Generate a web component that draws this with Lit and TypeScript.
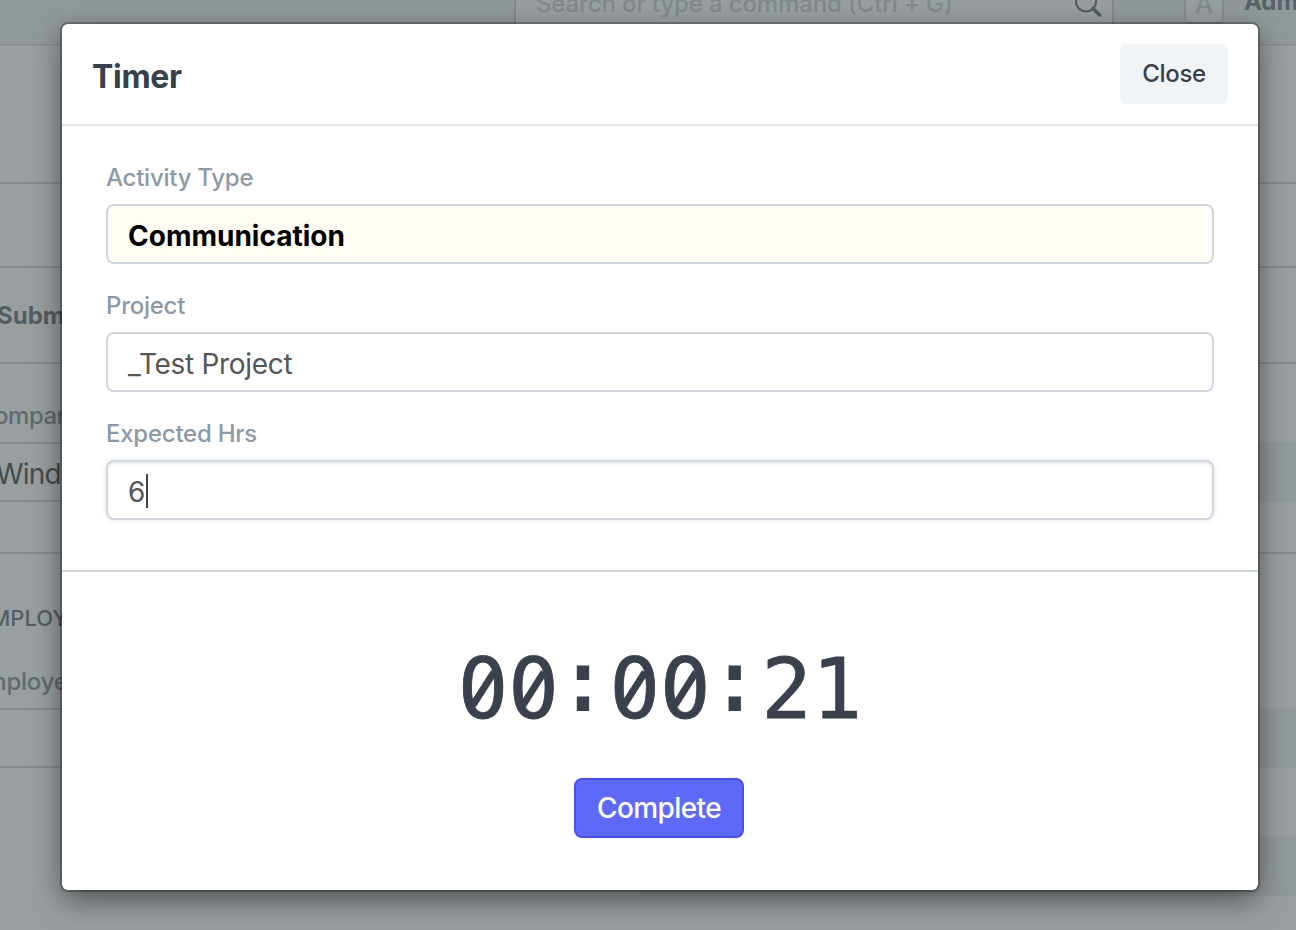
import { LitElement, html, css } from "lit";
import { customElement } from "lit/decorators.js";

@customElement("desk-page")
class DeskPage extends LitElement {
  static styles = css`
    :host { display: block; height: 930px; overflow: hidden; background: #999fa1; color: #535d63; }
    .nav { box-sizing: border-box; height: 46px; display: flex; align-items: flex-start; background: #92999b; border-bottom: 2px solid #8b9193; padding-left: 514px; overflow: hidden; }
    .search { box-sizing: border-box; flex: none; width: 600px; height: 34px; display: flex; justify-content: space-between; border: solid #83898c; border-width: 0 2px; background: #999fa1; padding: 0 9px 0 20px; color: #82898d; font-size: 24px; }
    .hint { line-height: 30px; margin-top: -11px; letter-spacing: -0.13px; white-space: pre; font-weight: 450; }
    .glass { width: 30px; height: 30px; margin-top: -11px; flex: none; }
    .avatar { box-sizing: border-box; flex: none; width: 40px; height: 38px; margin: -14px 0 0 70px; border: 2px solid #858c8f; border-radius: 6px; text-align: center; font-size: 26px; line-height: 31px; color: #838a8d; background: #999fa1; font-weight: 450; }
    .user { flex: none; margin: -13px 0 0 20px; font-size: 24px; line-height: 30px; font-weight: 700; white-space: nowrap; color: #586268; }
    .row { box-sizing: border-box; border-bottom: 2px solid #858b8f; white-space: nowrap; }
    .head { height: 138px; }
    .bar { height: 84px; }
    .state { height: 96px; font-size: 24px; font-weight: 700; line-height: 96px; }
    .state span { margin-left: -3px; }
    .section { height: 190px; }
    .last { border-bottom: 0; height: 376px; }
    .cols { display: grid; grid-template-columns: 640px 1fr; }
    .label { display: block; font-size: 24px; color: #606b70; font-weight: 450; }
    .company { height: 78px; line-height: 104px; margin-left: -23px; letter-spacing: -0.5px; }
    .box { box-sizing: border-box; height: 60px; border: solid #858b8f; border-width: 2px 0; font-size: 28px; line-height: 61px; color: #454c50; }
    .box span { margin-left: -4px; letter-spacing: -0.8px; }
    .band { height: 60px; background: #92999b; margin-top: 78px; }
    .heading { display: block; height: 62px; padding-top: 48px; box-sizing: border-box; line-height: 32px; margin-left: -23px; font-size: 22px; font-weight: 450; }
    .employee { height: 92px; line-height: 132px; margin-left: -29px; letter-spacing: -0.2px; }
    .first { margin-top: 154px; }
    .second { margin-top: 68px; }
  `;
  render() {
    return html`
      <div class="nav">
        <div class="search"><span class="hint">Search or type a command (Ctrl + G)</span>
          <svg class="glass" viewBox="0 0 30 30" fill="none" stroke="#535c60"><circle cx="13" cy="12.5" r="10" stroke-width="2"/><path d="m20 19.5 6.5 6.5" stroke-width="3.4" stroke-linecap="round"/></svg>
        </div>
        <div class="avatar">A</div><div class="user">Administrator</div>
      </div>
      <div class="row head"></div>
      <div class="row bar"></div>
      <div class="row state"><span>Submit</span></div>
      <div class="row section cols">
        <div><span class="label company">Company</span><div class="box"><span>Wind</span></div></div>
        <div><div class="band"></div></div>
      </div>
      <div class="row last cols">
        <div><span class="heading">EMPLOYEE</span><span class="label employee">Employee</span><div class="box"></div></div>
        <div><div class="band first"></div><div class="band second"></div></div>
      </div>`;
  }
}

@customElement("timer-dialog")
class TimerDialog extends LitElement {
  static styles = css`
    :host { display: flex; flex-direction: column; background: #fff; border-radius: 6px; box-shadow: 0 0 0 2px rgba(0,0,0,.25), 0 10px 30px rgba(0,0,0,.5); color: #36414c; }
    .header { box-sizing: border-box; height: 102px; display: flex; justify-content: space-between; align-items: flex-start; border-bottom: 2px solid #e3e5e7; padding: 20px 30px 0 30px; }
    .title { font-size: 32px; line-height: 40px; margin-top: 13px; font-weight: 700; letter-spacing: -0.3px; }
    .close { width: 108px; height: 60px; border-radius: 6px; background: #f0f4f7; text-align: center; font-size: 24px; line-height: 59px; font-weight: 450; letter-spacing: -0.3px; }
    .form { box-sizing: border-box; height: 446px; padding: 36px 44px 0; border-bottom: 2px solid #d1d8dd; }
    .field { height: 128px; }
    .label { display: block; height: 42px; line-height: 32px; font-size: 24px; color: #8d99a6; font-weight: 450; letter-spacing: -0.25px; }
    .input { box-sizing: border-box; height: 60px; display: flex; align-items: center; border: 2px solid #d1d5dd; border-radius: 8px; padding: 3px 20px 0; font-size: 28px; color: #555; letter-spacing: -0.3px; }
    .required { background: #fffdf4; color: #000; font-weight: 700; letter-spacing: 0; }
    .focus { letter-spacing: 0; box-shadow: inset 0 2px 3px rgba(0,0,0,.07), 0 0 5px rgba(102,125,145,.2); }
    .caret { width: 2px; height: 34px; background: #444; margin: -1px 0 0 1px; }
    .footer { display: flex; flex-direction: column; align-items: center; padding-top: 67px; }
    .clock { height: 100px; line-height: 100px; font-family: "DejaVu Sans Mono", monospace; font-size: 84px; white-space: nowrap; color: #3a414c; -webkit-text-stroke: 0.8px #3a414c; }
    .zero { position: relative; display: inline-block; }
    .zero::before { content: ""; position: absolute; left: 17.3px; top: 33px; width: 16px; height: 32px; border-radius: 50%; background: #fff; }
    .zero::after { content: ""; position: absolute; left: 22px; top: 30px; width: 6.6px; height: 39px; background: #3a414c; transform: rotate(32.5deg); }
    .colon { position: relative; top: -8px; left: -1px; -webkit-text-stroke: 2px #3a414c; }
    .complete { box-sizing: border-box; width: 170px; height: 60px; margin: 39px 2px 0 0; border: 2px solid #444ff5; border-radius: 8px; background: #5e6af7; color: #fff; text-align: center; font-size: 28px; line-height: 57px; font-weight: 500; letter-spacing: -0.6px; }
  `;
  render() {
    const zero = html`<span class="zero">0</span>`;
    const colon = html`<span class="colon">:</span>`;
    return html`
      <div class="header"><div class="title">Timer</div><div class="close">Close</div></div>
      <div class="form">
        <div class="field"><span class="label">Activity Type</span><div class="input required">Communication</div></div>
        <div class="field"><span class="label">Project</span><div class="input">_Test Project</div></div>
        <div class="field"><span class="label">Expected Hrs</span><div class="input focus">6<span class="caret"></span></div></div>
      </div>
      <div class="footer"><div class="clock">${zero}${zero}${colon}${zero}${zero}${colon}21</div><div class="complete">Complete</div></div>`;
  }
}

@customElement("app-root")
class AppRoot extends LitElement {
  static styles = css`
    :host { display: block; position: relative; width: 1296px; height: 930px; overflow: hidden; font-family: Inter, "Liberation Sans", sans-serif; }
    .dialog { position: absolute; left: 62px; top: 24px; width: 1196px; height: 866px; }
  `;
  render() {
    return html`<desk-page></desk-page><timer-dialog class="dialog"></timer-dialog>`;
  }
}
